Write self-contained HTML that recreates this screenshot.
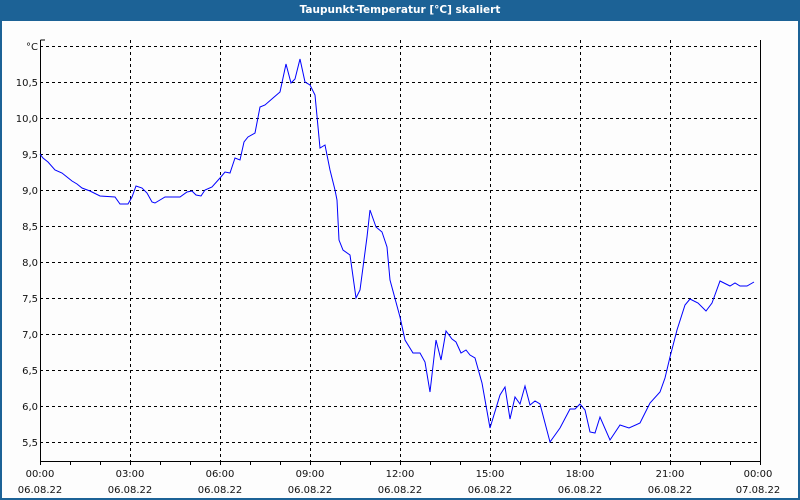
<!DOCTYPE html>
<html><head><meta charset="utf-8"><style>
html,body{margin:0;padding:0;width:800px;height:500px;overflow:hidden;background:#fff}
svg{display:block}
text{font-family:"DejaVu Sans","Liberation Sans",sans-serif;font-size:10px;fill:#111}
</style></head><body>
<svg width="800" height="500" viewBox="0 0 800 500">
<rect x="0" y="0" width="800" height="500" fill="#1c6296"/>
<rect x="2" y="21" width="796" height="477" fill="#fdfdfd"/>
<text x="400" y="13" text-anchor="middle" style="font-weight:bold;font-size:10.5px;fill:#fff">Taupunkt-Temperatur [°C] skaliert</text>
<g stroke="#000" stroke-width="1" stroke-dasharray="3,3" fill="none">
<path d="M40 46.5H760M40 82.5H760M40 118.5H760M40 154.5H760M40 190.5H760M40 226.5H760M40 262.5H760M40 298.5H760M40 334.5H760M40 370.5H760M40 406.5H760M40 442.5H760"/>
<path d="M130.5 40V461M220.5 40V461M310.5 40V461M400.5 40V461M490.5 40V461M580.5 40V461M670.5 40V461"/>
</g>
<g stroke="#000" stroke-width="1" fill="none">
<path d="M40.5 40V461.5H760.5V40"/>
<path d="M40.5 40H45"/>
<path d="M70.5 461v4M100.5 461v4M130.5 461v4M160.5 461v4M190.5 461v4M220.5 461v4M250.5 461v4M280.5 461v4M310.5 461v4M340.5 461v4M370.5 461v4M400.5 461v4M430.5 461v4M460.5 461v4M490.5 461v4M520.5 461v4M550.5 461v4M580.5 461v4M610.5 461v4M640.5 461v4M670.5 461v4M700.5 461v4M730.5 461v4M760.5 461v4M40.5 461v4"/>
</g>
<g text-anchor="end">
<text x="38" y="50">°C</text>
<text x="38" y="86">10,5</text><text x="38" y="122">10,0</text><text x="38" y="158">9,5</text>
<text x="38" y="194">9,0</text><text x="38" y="230">8,5</text><text x="38" y="266">8,0</text>
<text x="38" y="302">7,5</text><text x="38" y="338">7,0</text><text x="38" y="374">6,5</text>
<text x="38" y="410">6,0</text><text x="38" y="446">5,5</text>
</g>
<g text-anchor="middle">
<text x="40" y="477">00:00</text><text x="40" y="493">06.08.22</text>
<text x="130" y="477">03:00</text><text x="130" y="493">06.08.22</text>
<text x="220" y="477">06:00</text><text x="220" y="493">06.08.22</text>
<text x="310" y="477">09:00</text><text x="310" y="493">06.08.22</text>
<text x="400" y="477">12:00</text><text x="400" y="493">06.08.22</text>
<text x="490" y="477">15:00</text><text x="490" y="493">06.08.22</text>
<text x="580" y="477">18:00</text><text x="580" y="493">06.08.22</text>
<text x="670" y="477">21:00</text><text x="670" y="493">06.08.22</text>
<text x="758" y="477">00:00</text><text x="758" y="493">07.08.22</text>
</g>
<polyline fill="none" stroke="#0000ff" stroke-width="1" points="40,154 43,158 48,162 55,170 62,173 67,177 72,181 77,184 82,188 90,191 100,196 115,197 120,204 128,204 132,197 136,186 142,188 147,193 152,202 155,203 165,197 180,197 187,192 192,191 196,195 201,196 205,190 212,187 220,178 225,172 230,173 235,158 240,160 244,142 248,137 255,133 260,107 265,105 273,98 280,92 286,64 291,83 295,79 300,59 305,82 310,85 315,95 320,148 325,145 330,170 335,190 337,200 339,240 343,250 350,255 356,298 360,290 367,237 370,210 376,227 382,232 387,247 390,280 400,317 405,340 413,353 420,353 425,362 430,392 436,340 441,360 446,331 452,339 456,342 461,353 466,350 470,355 475,358 482,383 490,428 500,395 505,387 510,419 515,397 520,404 525,386 530,405 535,401 540,404 550,442 560,428 570,409 575,409 580,404 585,410 590,432 595,433 600,417 610,440 620,425 629,428 640,423 650,403 660,392 665,378 670,357 677,330 685,305 690,299 698,303 706,311 712,303 720,281 730,286 735,283 740,286 747,286 754,282"/>
</svg>
</body></html>
